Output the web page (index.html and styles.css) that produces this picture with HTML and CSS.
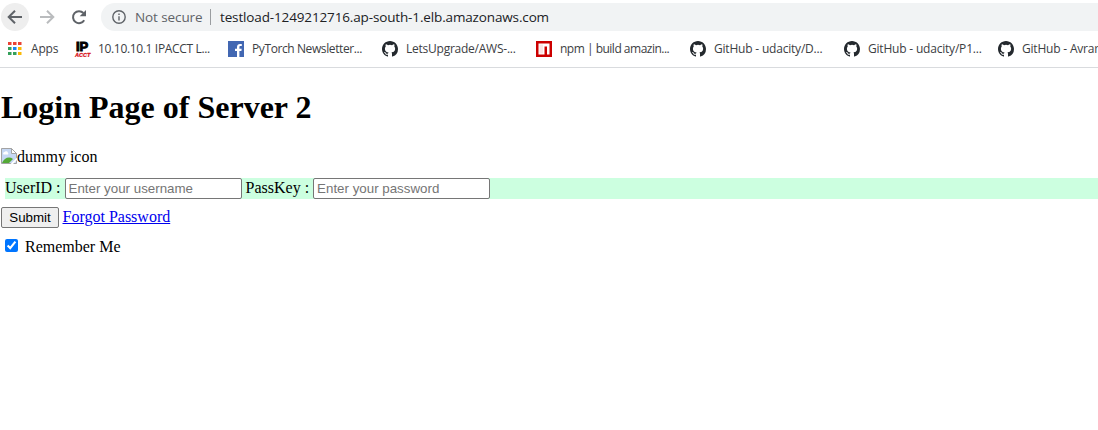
FILE: index.html
```html
<!DOCTYPE html>
<html lang="en">
<head>
<meta charset="utf-8">
<title>Login</title>
<link rel="stylesheet" href="styles.css">
</head>
<body>
<svg class="defs" width="0" height="0">
  <symbol id="github" viewBox="0 0 16 16"><path fill="#24292e" d="M8 0C3.58 0 0 3.58 0 8c0 3.54 2.29 6.53 5.47 7.59.4.07.55-.17.55-.38 0-.19-.01-.82-.01-1.49-2.01.37-2.53-.49-2.69-.94-.09-.23-.48-.94-.82-1.13-.28-.15-.68-.52-.01-.53.63-.01 1.08.58 1.23.82.72 1.21 1.87.87 2.33.66.07-.52.28-.87.51-1.07-1.78-.2-3.64-.89-3.64-3.95 0-.87.31-1.59.82-2.15-.08-.2-.36-1.02.08-2.12 0 0 .67-.21 2.2.82a7.6 7.6 0 0 1 4 0c1.53-1.04 2.2-.82 2.2-.82.44 1.1.16 1.92.08 2.12.51.56.82 1.27.82 2.15 0 3.07-1.87 3.75-3.65 3.95.29.25.54.73.54 1.48 0 1.07-.01 1.93-.01 2.2 0 .21.15.46.55.38A8.01 8.01 0 0 0 16 8c0-4.42-3.58-8-8-8z"/></symbol>
</svg>
<header class="browser">
  <div class="toolbar">
    <span class="nav nav-back"><svg width="16" height="16" viewBox="0 0 16 16"><path d="M15 8H2M8 1.7 1.7 8 8 14.3" fill="none" stroke="#5f6368" stroke-width="2"/></svg></span>
    <span class="nav"><svg width="16" height="16" viewBox="0 0 16 16"><path d="M1 8h13M8 1.7 14.3 8 8 14.3" fill="none" stroke="#babcbe" stroke-width="2"/></svg></span>
    <span class="nav"><svg width="16" height="16" viewBox="0 0 16 16"><path d="M13.2 11.2A6 6 0 1 1 12.4 4" fill="none" stroke="#5f6368" stroke-width="2"/><path d="M15 1v6.3H8.7z" fill="#5f6368"/></svg></span>
    <div class="address">
      <svg width="14" height="14" viewBox="0 0 14 14"><circle cx="7" cy="7" r="6.2" fill="none" stroke="#5f6368" stroke-width="1.4"/><path d="M6.3 6.2h1.4v4.3H6.3zM6.3 3.5h1.4v1.4H6.3z" fill="#5f6368"/></svg>
      <span class="security">Not secure</span>
      <span class="url">testload-1249212716.ap-south-1.elb.amazonaws.com</span>
    </div>
  </div>
  <nav class="bookmarks">
    <a class="bookmark apps"><svg width="16" height="16" viewBox="0 0 16 16"><path d="M0 1h3.5v3H0zM5 1h3.5v3H5zM10 1h3.5v3H10z" fill="#ea4335"/><path d="M0 6h3.5v3H0zM0 11h3.5v3H0zM5 11h3.5v3H5z" fill="#34a05a"/><path d="M5 6h3.5v3H5z" fill="#1a87f0"/><path d="M10 6h3.5v3H10zM10 11h3.5v3H10z" fill="#fbb905"/></svg><span>Apps</span></a>
    <a class="bookmark ip"><span class="ip-logo"><b>IP</b><i>ACCT</i></span><span>10.10.10.1 IPACCT L...</span></a>
    <a class="bookmark fb"><svg width="16" height="16" viewBox="0 0 16 16"><path d="M0 0h16v16H0z" fill="#4267b2"/><path d="M9 16v-6H7V7.7h2V6c0-2 1.2-3.1 3-3.1h1.8V5h-1.2c-1 0-1.2.5-1.2 1.2v1.5h2.3l-.3 2.3h-2v6z" fill="#fff"/></svg><span>PyTorch Newsletter...</span></a>
    <a class="bookmark lets"><svg width="16" height="16"><use href="#github"/></svg><span>LetsUpgrade/AWS-...</span></a>
    <a class="bookmark npm"><svg width="16" height="16" viewBox="0 0 16 16"><path d="M0 0h16v16H0z" fill="#c00"/><path d="M2.5 2.5h11v11H11v-8H8.5v8h-6z" fill="#fff"/><path d="M3.5 3.5H7v9H3.5z" fill="#c00" opacity=".1"/></svg><span>npm | build amazin...</span></a>
    <a class="bookmark gh"><svg width="16" height="16"><use href="#github"/></svg><span>GitHub - udacity/D...</span></a>
    <a class="bookmark gh"><svg width="16" height="16"><use href="#github"/></svg><span>GitHub - udacity/P1...</span></a>
    <a class="bookmark gh"><svg width="16" height="16"><use href="#github"/></svg><span>GitHub - Avrar</span></a>
  </nav>
</header>
<main class="page">
  <h1>Login Page of Server 2</h1>
  <div class="picture"><svg width="16" height="16" viewBox="0 0 16 16"><path d="M.5.5h10l5 5v10H.5z" fill="#c6d8f4" stroke="#a3a3a3"/><path d="M10.5.5v5h5z" fill="#fff" stroke="#a3a3a3"/><path d="M2.5 6.5a1.5 1.5 0 0 1 1-2.5 2 2 0 0 1 3.5 1 1 1 0 0 1 0 1.5z" fill="#fff"/><path d="M1 15c2-5 7-7 11-4l-4 4z" fill="#54a936"/><path d="M9 16.5 16.5 9v2.5l-5 5z" fill="#fff"/></svg><span>dummy icon</span></div>
  <form>
    <div class="fields"><label for="user">UserID :</label> <input id="user" type="text" placeholder="Enter your username"> <label for="pass">PassKey :</label> <input id="pass" type="password" placeholder="Enter your password"></div>
    <div class="actions"><button type="button">Submit</button><a href="#">Forgot Password</a></div>
    <div class="remember"><input id="rem" type="checkbox" checked><label for="rem">Remember Me</label></div>
  </form>
</main>
</body>
</html>
```
FILE: styles.css
```css
body { margin: 0; background: #fff; overflow: hidden; font: 16px/18px "Liberation Serif", serif; color: #000; }
svg { display: block; flex: none; }
.defs { position: absolute; }
.browser { box-sizing: border-box; height: 68px; padding-top: 3px; border-bottom: 1px solid #d9dbde; font-family: "Open Sans", sans-serif; }
.toolbar { display: flex; height: 28px; gap: 4px; padding-left: 1px; }
.nav { display: flex; align-items: center; justify-content: center; width: 28px; height: 28px; border-radius: 50%; }
.nav-back { background: #eeeeee; }
.address { display: flex; align-items: center; flex: 1; margin-left: 4px; padding-left: 11px; background: #f1f3f4; border-radius: 14px 0 0 14px; font-size: 13.5px; white-space: nowrap; }
.security { width: 75px; margin-left: 9px; color: #5f6368; border-right: 1px solid #9a9da0; line-height: 16px; letter-spacing: -.1px; }
.url { margin-left: 9px; color: #202124; letter-spacing: -.14px; }
.bookmarks { display: flex; padding: 10px 0 0 8px; font-size: 12px; line-height: 16px; color: #3c4043; white-space: nowrap; overflow: hidden; }
.bookmark { display: flex; flex: none; gap: 8px; width: 154px; letter-spacing: -.2px; }
.apps { width: 67px; gap: 7px; }
.ip { width: 153px; gap: 7px; letter-spacing: -.34px; }
.fb { letter-spacing: -.4px; }
.lets { letter-spacing: -.24px; }
.npm { letter-spacing: -.5px; }
.ip-logo { display: flex; flex-direction: column; width: 16px; height: 16px; font-family: "Liberation Sans", sans-serif; letter-spacing: 0; }
.ip-logo b { height: 11px; padding-left: 1px; font-size: 13px; line-height: 12px; color: #000; -webkit-text-stroke: 1px #000; }
.ip-logo i { font-size: 5.5px; line-height: 6px; font-weight: bold; color: #d8141c; -webkit-text-stroke: .3px #d8141c; }
.page { padding-left: 1px; }
h1 { margin: 21px 0; font-size: 32px; line-height: 37px; }
.picture { display: flex; height: 17px; margin-top: 22px; }
.fields { margin: 13px 0 0 4px; height: 21px; background: #ccffe0; white-space: nowrap; }
.fields input { box-sizing: border-box; width: 177px; height: 21px; margin: 0; padding: 1px 3px; border: 1px solid #767676; border-radius: 2px; background: #fff; font: 13.333px "Liberation Sans", sans-serif; }
input::placeholder { color: #757575; }
.actions { margin-top: 8px; height: 21px; }
button { box-sizing: border-box; width: 58px; height: 21px; margin: 0 3.5px 0 0; padding: 0; border: 1px solid #767676; border-radius: 2px; background: #efefef; color: #000; font: 13.333px "Liberation Sans", sans-serif; }
a[href] { color: #0000ee; }
.remember { display: flex; margin-top: 10px; }
.remember input { width: 13px; height: 13px; margin: 1px 7px 0 4px; }
```
